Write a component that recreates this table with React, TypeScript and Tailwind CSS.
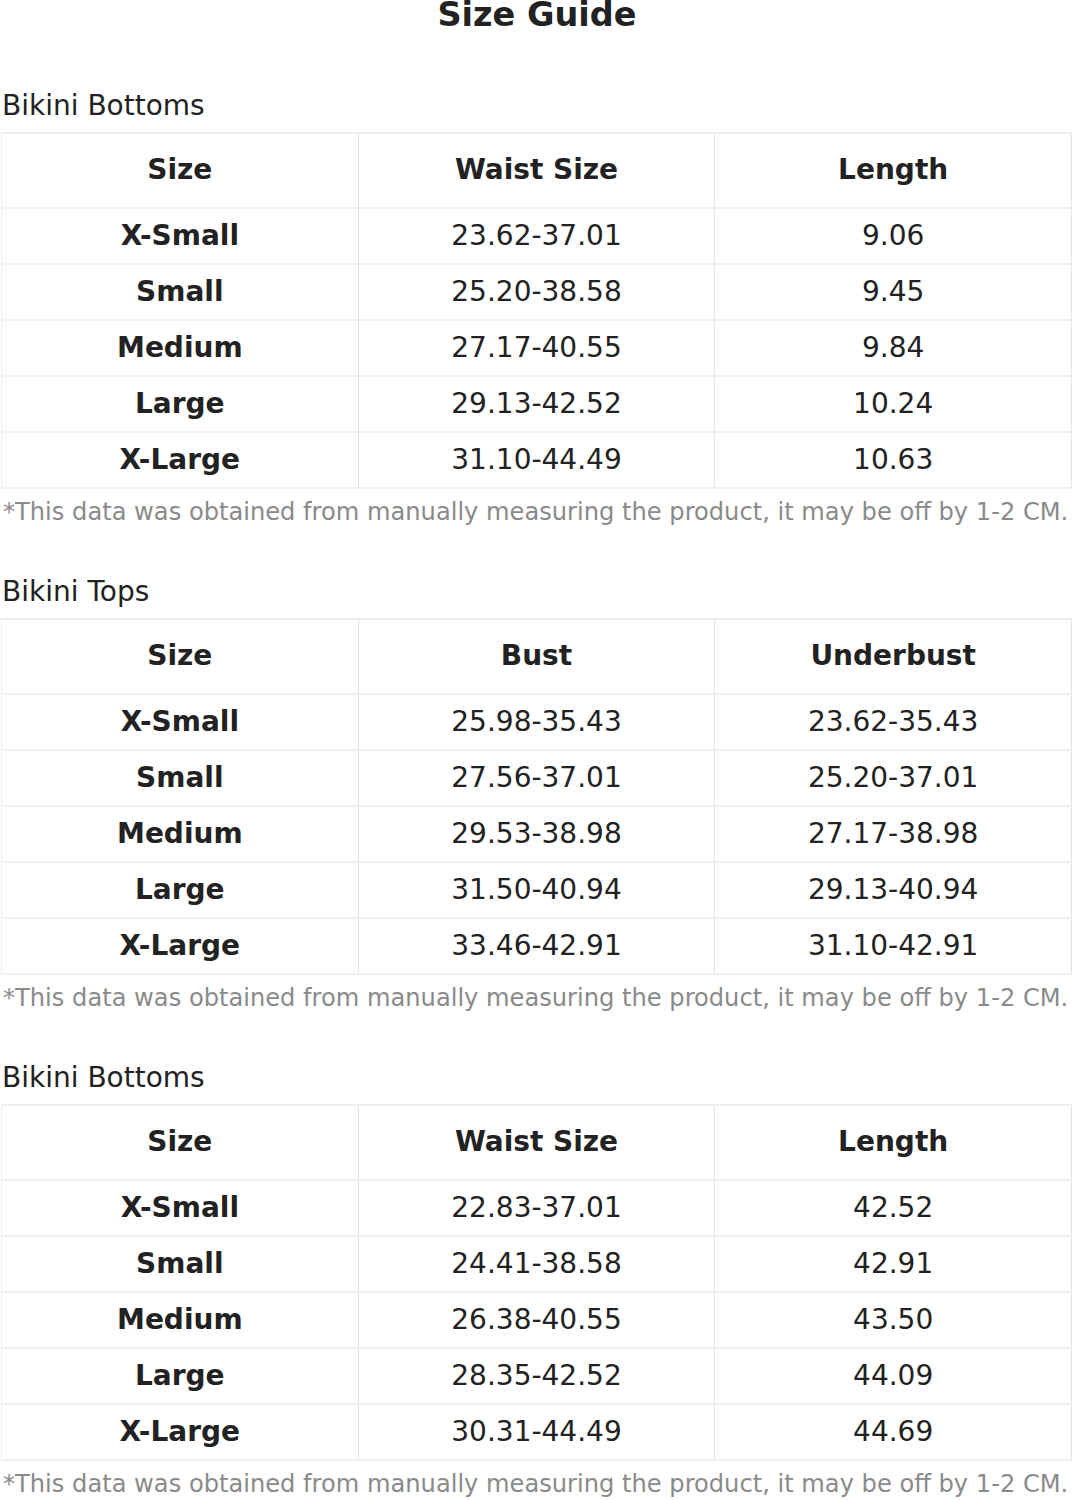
const bottoms1 = {
  title: 'Bikini Bottoms',
  cols: ['Size', 'Waist Size', 'Length'],
  rows: [
    ['X-Small', '23.62-37.01', '9.06'],
    ['Small', '25.20-38.58', '9.45'],
    ['Medium', '27.17-40.55', '9.84'],
    ['Large', '29.13-42.52', '10.24'],
    ['X-Large', '31.10-44.49', '10.63'],
  ],
};

const tops = {
  title: 'Bikini Tops',
  cols: ['Size', 'Bust', 'Underbust'],
  rows: [
    ['X-Small', '25.98-35.43', '23.62-35.43'],
    ['Small', '27.56-37.01', '25.20-37.01'],
    ['Medium', '29.53-38.98', '27.17-38.98'],
    ['Large', '31.50-40.94', '29.13-40.94'],
    ['X-Large', '33.46-42.91', '31.10-42.91'],
  ],
};

const bottoms2 = {
  title: 'Bikini Bottoms',
  cols: ['Size', 'Waist Size', 'Length'],
  rows: [
    ['X-Small', '22.83-37.01', '42.52'],
    ['Small', '24.41-38.58', '42.91'],
    ['Medium', '26.38-40.55', '43.50'],
    ['Large', '28.35-42.52', '44.09'],
    ['X-Large', '30.31-44.49', '44.69'],
  ],
};

type Chart = typeof bottoms1;

function SizeTable({ chart }: { chart: Chart }) {
  return (
    <section className="mb-[54px]">
      <h2 className="pl-[2px] mb-[12px] text-[28px] leading-none text-[#222]">
        {chart.title}
      </h2>
      <div className="ml-[1px] mr-[2px] border-t-2 border-l border-[#eeeeee]">
        <div className="grid grid-cols-3 h-[75px] border-b-2 border-[#f0f0f0]">
          {chart.cols.map((c) => (
            <div key={c} className="flex items-center justify-center border-r border-[#e3e3e3] text-[28px] font-bold text-[#222]">
              {c}
            </div>
          ))}
        </div>
        {chart.rows.map((row, i) => (
          <div key={i} className="grid grid-cols-3 h-[56px] border-b-2 border-[#f0f0f0]">
            {row.map((cell, j) => (
              <div
                key={j}
                className={`flex items-center justify-center border-r border-[#e3e3e3] text-[28px] text-[#222] ${j === 0 ? 'font-bold' : ''}`}
              >
                {cell}
              </div>
            ))}
          </div>
        ))}
      </div>
      <p className="pl-[3px] mt-[11px] text-[24.15px] leading-none whitespace-nowrap text-[#8a8a8a]">
        *This data was obtained from manually measuring the product, it may be off by 1-2 CM.
      </p>
    </section>
  );
}

export default function App() {
  return (
    <div className="w-[1074px] bg-white font-['DejaVu_Sans',sans-serif]">
      <h1 className="text-center text-[33.5px] font-bold leading-none -mt-[2px] mb-[60px] text-[#222]">
        Size Guide
      </h1>
      <SizeTable chart={bottoms1} />
      <SizeTable chart={tops} />
      <SizeTable chart={bottoms2} />
    </div>
  );
}
